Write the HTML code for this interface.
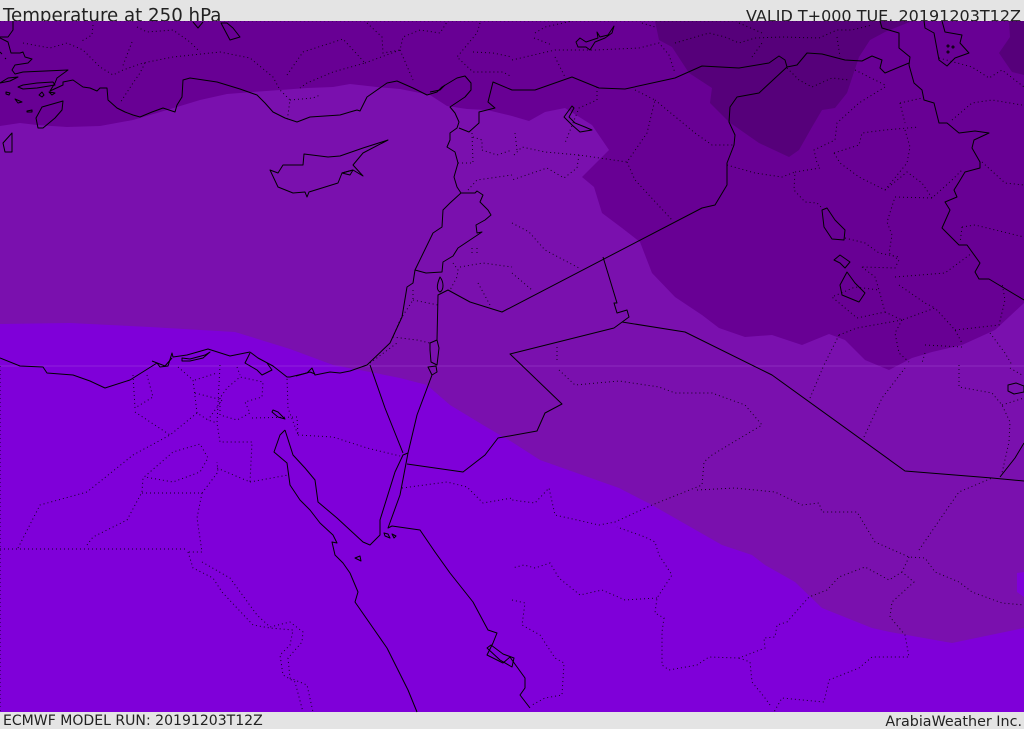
<!DOCTYPE html>
<html><head><meta charset="utf-8"><title>Temperature at 250 hPa</title>
<style>
html,body{margin:0;padding:0;background:#e4e4e4;overflow:hidden}
svg{display:block}
text{font-family:"DejaVu Sans",sans-serif;fill:#222}
.c{fill:none;stroke:#000;stroke-width:1;stroke-linejoin:round}
.d{fill:none;stroke:#000;stroke-width:1;stroke-dasharray:1 3;opacity:.85}
</style></head><body>
<svg width="1024" height="729" viewBox="0 0 1024 729" xmlns="http://www.w3.org/2000/svg">
<rect width="1024" height="729" fill="#e4e4e4"/>
<text x="3" y="21.5" font-size="18.2">Temperature at 250 hPa</text>
<text x="1021" y="21.5" font-size="16" text-anchor="end">VALID T+000 TUE. 20191203T12Z</text>
<text x="3" y="725" font-size="14.05">ECMWF MODEL RUN: 20191203T12Z</text>
<text x="1022" y="726" font-size="14.3" text-anchor="end">ArabiaWeather Inc.</text>
<rect x="0" y="21" width="1024" height="691" fill="#7f00d9"/>
<path fill="#7a10ae" d="M0,21H1024V628L952,643 890,632 872,628 822,608 795,582 765,565 752,555 722,545 652,505 619,488 540,460 512,442 500,435 483,425 450,405 427,385 400,378 370,372 333,365 290,349 235,332 150,327 70,323 0,324Z"/>
<path fill="#7f00d9" d="M1017,573 1024,572V597L1017,592Z"/>
<path fill="#680094" d="M0,21H1024V303L995,330 962,345 932,352 912,358 889,370 865,360 845,340 829,334 802,345 772,335 745,337 719,328 702,315 675,297 652,273 640,242 622,228 602,213 594,187 582,177 609,150 592,125 565,108 545,112 529,121 512,116 487,110 467,109 447,106 430,95 400,89 377,87 350,84 333,87 307,88 280,90 253,92 227,94 200,100 167,110 133,120 100,126 67,127 37,125 20,123 0,126Z"/>
<path fill="#56007a" d="M655,21 659,40 672,47 689,73 712,88 710,103 729,122 759,143 789,157 799,150 812,127 822,110 835,108 847,93 859,57 870,40 885,32 912,21Z"/>
<path fill="#56007a" d="M1009,21 1010,37 999,53 1012,72 1024,75V21Z"/>
<rect x="0" y="365.5" width="1024" height="1" fill="#b060e0" opacity=".35"/>

<g class="d">
<path d="M23,43 50,48 67,43 83,50 100,67 113,75 123,70 143,63 173,57 220,52 250,58 273,77 280,90 290,100 287,122"/>
<path d="M93,25 92,35 80,42"/><path d="M137,27 147,32 173,30 190,42 200,52"/>
<path d="M132,42 122,68"/><path d="M145,63 140,73 133,83 120,103"/>
<path d="M287,75 303,52 343,39 365,63 333,72 307,83 300,88"/>
<path d="M365,63 400,50 403,37 420,30 440,33 447,22"/><path d="M367,23 382,37 383,53 400,50"/>
<path d="M400,50 413,80"/><path d="M480,23 477,33 457,57 473,72 503,72 512,77"/><path d="M473,52 493,53 512,57"/>
<path d="M290,100 313,98 320,95"/>
<path d="M472,133 473,163 457,163"/><path d="M482,150 497,155 512,150"/><path d="M473,137 482,140 482,150"/>
<path d="M468,190 477,180 512,175"/><path d="M453,263 458,270 457,277 450,290"/><path d="M460,267 483,263 512,267"/>
<path d="M478,283 490,305"/><path d="M472,248V254"/><path d="M477,248V254"/>
<path d="M413,290 413,300 400,320 393,337 417,340 430,343"/><path d="M413,300 438,305"/><path d="M370,363 397,343"/>
<path d="M535,33 545,27 572,21"/><path d="M512,60 555,50 595,50 639,48 659,43 669,55 675,73"/>
<path d="M534,38 552,45"/><path d="M555,57 565,77"/><path d="M642,23 655,27"/>
<path d="M675,43 709,33 725,37 739,43 755,38 782,37 819,38 837,30 852,30 872,25"/>
<path d="M739,23 762,33"/><path d="M752,57 762,43"/><path d="M837,37 840,57"/>
<path d="M787,68 799,80 812,87 832,78 849,80"/><path d="M855,70 885,85"/>
<path d="M885,87 859,103 837,123 835,140 814,150 817,163 820,168 795,172 794,190 805,202 817,203 822,208"/>
<path d="M727,165 755,173 782,177 795,172"/>
<path d="M834,153 859,145 862,133 885,130 919,127"/><path d="M905,130 910,147 907,163 885,190 859,177 840,163 834,153"/>
<path d="M900,103 922,98"/><path d="M900,103 905,123"/><path d="M952,120 972,103 992,100 1022,105"/>
<path d="M939,58 972,67 989,78 1002,70 1024,87"/><path d="M982,162 1005,183 1024,185"/>
<path d="M885,190 907,172 922,183 932,198 952,180 962,170"/>
<path d="M932,198 895,197 887,222 892,235 889,253 899,260 895,268 862,267"/>
<path d="M895,277 945,273 972,253"/><path d="M845,238 865,243 879,253 899,257"/>
<path d="M962,227 975,225 1024,237"/><path d="M962,227 960,243"/>
<path d="M862,267 875,277 879,290 855,287 832,297 857,318 885,312 879,290"/>
<path d="M885,312 902,320 935,308 955,330 962,343"/><path d="M902,320 895,333 899,353 909,362"/>
<path d="M899,285 925,303 935,308"/><path d="M955,330 999,325 1005,300 1002,283"/>
<path d="M925,353 922,363"/><path d="M925,345 962,347"/><path d="M990,333 1005,353 1012,365"/>
<path d="M839,335 857,328 902,320"/><path d="M839,335 824,365"/><path d="M557,347V363"/>
<path d="M512,223 529,232 545,250 579,268"/><path d="M512,273 532,290"/>
<path d="M597,87 597,100 579,108 565,143"/>
<path d="M635,90 655,100 647,133 627,162 579,155 545,152 522,147 512,157"/>
<path d="M655,100 695,133 712,145 734,145"/><path d="M627,162 635,180 672,220"/>
<path d="M579,155 577,168 564,178 547,168 512,180"/><path d="M515,133 517,150"/>
<path d="M559,370 575,385 619,381 659,387 675,393 712,393 745,405 762,425 712,455 704,462 702,485 652,505 615,522 599,525 555,515 549,488 535,503 512,500"/>
<path d="M697,490 735,488 775,492 802,505 819,503 822,512 857,512 875,542 909,557 925,558 935,572 959,582 972,592 1002,603 1024,605"/>
<path d="M909,557 902,572 914,582 892,602 890,617 905,635 909,657 872,657 859,668 829,680 824,702 782,698 774,712"/>
<path d="M902,572 889,580 865,567 839,577 827,590 809,597 787,622 777,625 775,637 764,638 765,648 739,658 709,657 697,665 669,670 662,665 662,632 664,618 655,613 657,598 672,575 659,555 655,542 645,537 617,527"/>
<path d="M657,598 625,600 602,590 580,595 559,578 550,563 535,568 524,565 512,568"/>
<path d="M739,658 750,662 752,682 765,698 770,705"/>
<path d="M512,600 525,603 522,625 540,635 555,658 564,663 562,695 545,698 532,705"/>
<path d="M919,550 945,512 959,492 992,478"/><path d="M864,437 882,398 905,368"/><path d="M810,398 824,365"/>
<path d="M959,365 959,387 992,393 1002,405 1010,422 1009,442 1002,473"/><path d="M1002,405 1024,398"/><path d="M1010,368 1022,375"/>
<path d="M0,366V712"/><path d="M0,549H188"/>
<path d="M18,548 40,505 87,492 133,455 170,435 197,413"/>
<path d="M87,545 93,537 127,520 142,492 143,478 173,452 200,444 208,458 200,472 173,482 145,477"/>
<path d="M142,493H202L218,472 217,462"/><path d="M202,493 197,518 202,552 188,552"/>
<path d="M188,552 193,568 213,578 222,592 253,625 270,628 293,630 290,645 280,655 283,675 295,682 303,712"/>
<path d="M202,562 230,578 257,615 270,627 290,622 303,632 302,642 288,658 290,678 307,685 313,712"/>
<path d="M133,375 135,408 153,397 147,375"/><path d="M135,412 170,435"/>
<path d="M178,367 193,380 197,413 208,420 217,423"/><path d="M195,380 217,373"/><path d="M195,393 222,400 208,420"/>
<path d="M220,365 217,423 220,442 252,442 250,482 217,468"/>
<path d="M220,398 220,415 237,420 250,413 245,402 262,397 263,382 240,377 227,388 220,398"/><path d="M237,367 240,375"/>
<path d="M252,418 297,417 298,435 288,408 287,378"/><path d="M250,482 288,475"/>
<path d="M298,435 333,437 367,448 400,456"/><path d="M402,488 447,482 467,487 483,503 512,498"/>
</g>
<path d="M0,21.5H1024" fill="none" stroke="#000" stroke-width="1" stroke-dasharray="1 3" opacity=".25"/>

<g class="c">
<!-- Aegean coast -->
<path d="M13,21 13,30 8,37 0,37"/>
<path d="M0,38 8,42 11,53 20,53 23,52 25,57 32,59 28,63 15,65 12,70 15,74 23,72 68,70 57,78 55,83 50,91 63,85 63,82 73,80 83,87 90,88 97,91 100,88 107,88 108,100 117,108 125,112 133,115 140,117 152,112 163,108 175,112 177,105 182,97 183,80 190,78 217,82 240,89 257,95 265,103 273,112 285,118 297,122 310,117 325,116 340,115 350,112 357,110 360,111 362,107 367,97 387,83 397,81 413,88 427,95 437,92 442,87 457,78 465,76 471,83 471,90 465,97 450,107 455,113 459,122 457,128 450,133 450,140 447,147 455,152 458,163 454,177 457,187 461,193 450,203 443,210 442,227 433,233 415,270 413,283 407,287 402,317 390,343 367,365 350,371 340,373 330,372 315,375 312,368 307,373 290,377 287,377 273,366 258,358 250,352"/>
<path d="M250,352 230,356 208,349 187,355 173,357 172,353 168,366 160,367 157,363 130,380 105,388 90,381 73,375 47,373 43,367 20,366 0,358"/>
<path d="M250,353 245,363 257,370 262,375 272,370 267,363"/>
<path d="M152,361 165,366 172,358"/><path d="M182,358 190,359 205,355 210,352 203,358 190,361 182,361Z"/>
<path d="M296,376 310,372 315,374"/>
<!-- Syria/Turkey border and eastward -->
<path d="M459,128 469,132 479,123 479,112 495,108 488,102 493,82 512,90 535,90 572,77 599,88 625,89 675,78 702,66 739,68 769,63 779,56 785,60 787,67 797,65 807,53 822,54 845,60 862,61 872,56 882,60 880,68 885,73 909,63"/>
<path d="M880,21 882,28 899,33 899,48 910,57 909,65 914,83 922,90 924,100 934,103 939,123 947,123 959,133 975,131 989,133 974,140 972,148 980,162 980,168 965,172 959,182 954,190 957,197 945,202 950,210 942,228 959,245 967,245 980,263 975,272 979,279 989,279 1024,300"/>
<path d="M787,67 759,93 737,97 730,107 729,122 735,135 734,145 727,163 727,185 715,205 702,208 502,312 470,302 448,290 438,295 437,340"/>
<path d="M461,193 475,193 477,191 483,195 480,202 488,210 491,215 485,220 476,225 477,233 482,232 458,248 453,256 443,262 442,272 426,273 415,270"/>
<path d="M440,277C437,284 436,290 440,292 444,290 444,282 440,277Z"/>
<path d="M430,343 437,340 439,348 437,365 431,362 430,350Z"/>
<path d="M432,375 428,367 436,366 437,372Z M432,375 417,415 408,453"/>
<!-- Sinai / Saudi border -->
<path d="M370,365 385,408 403,453"/>
<path d="M407,464 463,472 485,455 498,438 537,431 545,413 562,404 510,354 614,328 629,317 627,310 617,313 614,303 617,303 603,257"/>
<path d="M622,322 685,332 772,375 905,471 992,478 1024,481"/>
<path d="M1000,477 1015,458 1024,443"/>
<!-- Gulf of Suez / Red Sea -->
<path d="M285,430 280,435 274,452 287,463 290,485 300,500 310,510 320,523 333,535 337,543 332,542 335,555 343,563 350,573 358,592 355,602 387,648 397,668 408,690 417,712"/>
<path d="M285,430 293,455 305,468 315,480 318,502 337,518 363,542 370,545 380,535 380,520 395,472 403,455 408,453 400,495 388,528 392,526 420,530 435,552 450,573 473,602 488,630 497,633 493,643 487,655 503,663 510,657 512,660 525,678 525,688 520,695 530,708"/>
<path d="M273,410 278,412 285,419 278,417 272,412Z"/>
<path d="M355,558 360,556 361,561Z"/><path d="M384,533 388,534 390,538 385,536Z M392,534 396,536 394,538Z"/>
<path d="M487,648 500,660 512,667 514,658 503,654 491,645Z"/>
<!-- Cyprus -->
<path d="M270,170 278,187 293,193 305,192 307,197 309,192 338,183 342,173 353,170 363,176 353,165 363,153 388,140 363,148 340,156 328,157 304,154 303,165 283,165 278,173Z"/>
<path d="M342,173 353,170 350,175Z"/>
<!-- Aegean islands -->
<path d="M63,101 42,107 36,118 38,128 43,128 55,118 62,110Z"/>
<path d="M3,143 12,133 12,152 5,152Z"/>
<path d="M0,83 8,78 18,77 10,81Z"/>
<path d="M18,87 23,85 37,83 53,82 55,85 37,88 23,89Z"/>
<path d="M6,92 10,93 9,95 6,94Z"/><path d="M15,99 22,102 18,103Z"/><path d="M27,111 32,110 32,112 27,112Z"/>
<path d="M42,92 44,95 42,97 39,95Z"/><path d="M49,92 55,93 52,95Z"/><path d="M5,58 6,59"/><path d="M0,52 2,54"/>
<path d="M221,23 230,40 240,37 233,28 227,23Z"/><path d="M193,22 198,28 203,22"/>
<path d="M572,106 564,117 572,125 580,132 592,130 585,127 575,123 569,117 574,108Z"/>
<path d="M576,42 580,38 586,42 598,38 597,32 600,37 608,35 614,26 612,33 605,38 595,42 590,50 586,47 578,47Z"/>
<path d="M445,85 440,90 430,92"/>
<path d="M924,21 925,28 934,33 939,60 947,66 955,58 969,53 960,43 962,35 945,32 942,21"/>
<circle cx="948" cy="46" r="1"/><circle cx="953" cy="47" r="1"/><circle cx="948" cy="52" r="1"/>
<path d="M822,210 824,227 832,239 844,240 845,230 835,220 827,208Z"/>
<path d="M834,260 840,255 850,262 845,268 840,263Z"/>
<path d="M847,272 840,285 842,295 859,302 865,293 855,283Z"/>
<path d="M1008,385 1016,383 1024,386 1024,392 1014,394 1008,391Z"/>
</g>
</svg>
</body></html>
